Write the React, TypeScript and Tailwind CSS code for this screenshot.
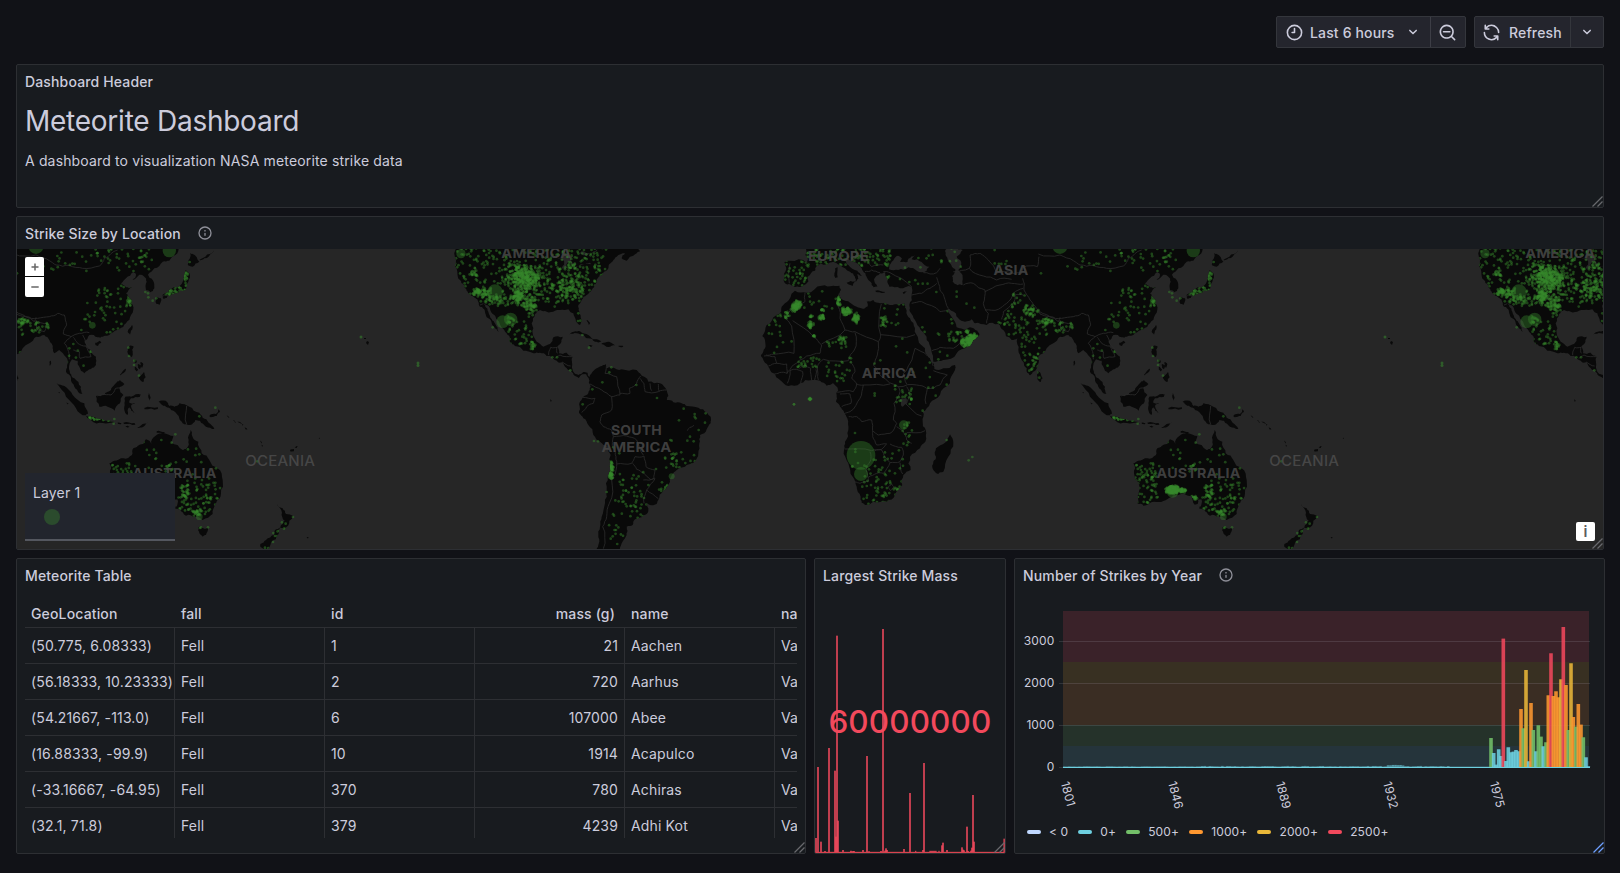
import React from "react";

/* ---------- icons ---------- */
const ICONS = {
  clock: "M12,2A10,10,0,1,0,22,12,10,10,0,0,0,12,2Zm0,18a8,8,0,1,1,8-8A8,8,0,0,1,12,20ZM12,6a1,1,0,0,0-1,1v4H9a1,1,0,0,0,0,2h3a1,1,0,0,0,1-1V7A1,1,0,0,0,12,6Z",
  searchMinus: "M21.71,20.29,18,16.61A9,9,0,1,0,16.61,18l3.68,3.68a1,1,0,0,0,1.42,0A1,1,0,0,0,21.71,20.29ZM11,18a7,7,0,1,1,7-7A7,7,0,0,1,11,18Zm4-8H7a1,1,0,0,0,0,2h8a1,1,0,0,0,0-2Z",
  sync: "M19.91,15.51H15.38a1,1,0,0,0,0,2h2.4A8,8,0,0,1,4,12a1,1,0,1,0-2,0,10,10,0,0,0,16.88,7.23V21a1,1,0,0,0,2,0V16.5A1,1,0,0,0,19.91,15.51ZM12,2A10,10,0,0,0,5.12,4.77V3a1,1,0,0,0-2,0V7.5a1,1,0,0,0,1,1h4.5a1,1,0,0,0,0-2H6.22A8,8,0,0,1,20,12a1,1,0,0,0,2,0A10,10,0,0,0,12,2Z",
  angleDown: "M17,9.17a1,1,0,0,0-1.41,0L12,12.71,8.46,9.17a1,1,0,0,0-1.41,0,1,1,0,0,0,0,1.42l4.24,4.24a1,1,0,0,0,1.42,0L17,10.59A1,1,0,0,0,17,9.17Z",
  info: "M12,2A10,10,0,1,0,22,12,10,10,0,0,0,12,2Zm0,18a8,8,0,1,1,8-8A8,8,0,0,1,12,20Zm0-8.5a1,1,0,0,0-1,1v3a1,1,0,0,0,2,0v-3A1,1,0,0,0,12,11.5Zm0-4a1.25,1.25,0,1,0,1.25,1.25A1.25,1.25,0,0,0,12,7.5Z",
};

function Icon({ name, className }: { name: keyof typeof ICONS; className: string }) {
  return (
    <svg viewBox="0 0 24 24" fill="currentColor" className={className}>
      <path d={ICONS[name]} />
    </svg>
  );
}

function ResizeHandle({ className = "text-[#68696d]" }: { className?: string }) {
  return (
    <svg viewBox="0 0 12 12" className={`absolute right-0 bottom-0 h-3 w-3 ${className}`} stroke="currentColor" strokeWidth="1.3">
      <path d="M1.5 11.5 L11.5 1.5 M6.5 11.5 L11.5 6.5" fill="none" />
    </svg>
  );
}

function Panel({
  title,
  info,
  className,
  handleClass,
  children,
}: {
  title: string;
  info?: boolean;
  className: string;
  handleClass?: string;
  children: React.ReactNode;
}) {
  return (
    <section className={`relative flex flex-col overflow-hidden rounded-xs border border-[#2d2f33] bg-[#181b1f] ${className}`}>
      <header className="flex h-8 shrink-0 items-center px-2 text-sm font-medium">
        <h2 className="mt-0.5">{title}</h2>
        {info && <Icon name="info" className="ml-4 h-4 w-4 text-[#8e8f98]" />}
      </header>
      {children}
      <ResizeHandle className={handleClass} />
    </section>
  );
}

/* ---------- map geometry ---------- */
type Pt = [number, number];

function rng(seed: number) {
  let s = seed;
  return () => {
    s = (s * 1664525 + 1013904223) % 4294967296;
    return s / 4294967296;
  };
}

function parse(s: string): Pt[] {
  return s.trim().split(/\s+/).map((p) => p.split(",").map(Number) as Pt);
}

/* Subdivides each edge with a small sideways shift, for natural coastlines. */
function coast(s: string, closed = true, amount = 0.16) {
  const rand = rng(s.length * 97 + 13);
  let pts = parse(s);
  for (let k = 0; k < 2; k++) {
    const out: Pt[] = [];
    const n = closed ? pts.length : pts.length - 1;
    for (let i = 0; i < n; i++) {
      const a = pts[i];
      const b = pts[(i + 1) % pts.length];
      const dx = b[0] - a[0];
      const dy = b[1] - a[1];
      const straight = (a[1] <= 27 && b[1] <= 27) || Math.hypot(dx, dy) < 4;
      const r = straight ? 0 : (rand() - 0.5) * 2 * amount;
      out.push(a, [(a[0] + b[0]) / 2 - dy * r, (a[1] + b[1]) / 2 + dx * r]);
    }
    if (!closed) out.push(pts[pts.length - 1]);
    pts = out;
  }
  return "M" + pts.map((p) => p[0].toFixed(1) + " " + p[1].toFixed(1)).join("L") + (closed ? "Z" : "");
}

type Region = {
  id: string;
  x: number;
  land: string[];
  water: string[];
  borders: string[];
  clusters: number[][];
  dots: string;
  big: number[][];
};

/* Each region is drawn in third-pixel units from its own left edge. */
const REGIONS: Region[] = [
  {
    id: "americas",
    x: 440,
    land: [
      "50,20 48,60 52,95 60,120 72,135 80,152 92,165 102,172 112,178 120,200 135,215 140,232 155,248 163,262 176,275 166,252 155,237 145,215 136,200 131,190 146,198 158,222 172,240 185,262 200,280 210,295 208,303 225,318 250,332 280,340 300,338 320,348 345,360 365,367 375,380 395,395 402,406 415,414 427,403 438,402 446,415 452,440 445,460 430,470 418,490 420,508 418,520 430,535 445,555 460,585 480,605 505,620 512,645 510,670 503,710 500,750 495,790 485,830 480,860 475,890 478,905 468,935 536,935 545,910 555,895 562,875 560,860 578,855 585,838 605,832 622,820 625,805 612,788 630,795 648,793 655,780 670,752 690,725 695,705 710,690 735,680 760,668 775,640 778,610 780,585 800,568 812,550 812,530 800,518 775,503 740,498 725,490 700,487 680,480 685,468 680,450 660,430 625,425 600,400 590,390 545,388 515,382 500,385 500,372 490,375 470,385 455,400 448,412 442,398 430,396 415,405 400,395 396,380 398,350 380,338 357,340 352,320 362,310 368,290 340,292 330,312 310,320 290,305 278,280 275,250 285,222 300,210 320,215 345,212 360,210 385,208 400,220 408,245 420,255 425,240 418,215 415,195 425,180 440,165 455,150 468,130 470,118 480,108 492,95 505,85 508,72 520,60 530,50 555,40 545,55 560,62 570,50 590,40 600,33 590,20",
      "388,283 402,275 420,274 445,285 465,298 484,304 465,305 445,295 430,284 410,280",
      "484,312 500,306 525,316 505,321",
      "536,317 550,318 548,321 536,320",
      "446,316 458,317 454,321",
      "440,240 443,241 450,250 446,254",
      "330,478 335,482 333,487",
    ],
    water: ["350,58 378,45 400,48 392,56 404,74 396,80 388,64 376,88 366,84 372,62", "400,84 450,68 452,73 405,88", "420,40 440,48 470,34 472,28 445,40 425,34"],
    borders: [
      "500,372 495,400 530,410 540,465 515,470 485,450 450,432",
      "540,460 570,460 568,445 590,430 602,408",
      "600,415 612,430 615,455 655,455 680,450",
      "630,430 635,452",
      "655,432 658,454",
      "515,470 515,510 485,525 480,545 490,560 515,570 520,590",
      "428,472 465,475 460,490 440,500 425,517",
      "520,590 520,625 528,650 530,680 515,720 508,790 500,830 488,860 490,926",
      "520,590 560,588 590,600 610,645",
      "530,672 575,670 585,650 612,648 618,680 645,690 642,715 610,720",
      "578,670 590,688 612,700 630,718 645,716 620,750 655,776",
      "620,750 612,790",
      "326,345 332,322 352,322",
      "345,356 360,345 398,350",
      "366,366 392,378",
      "350,322 352,340",
      "120,195 130,190",
      "742,572 750,562 762,556",
    ],
    clusters: [
      [270, 110, 230, 90, 380, 0],
      [255, 112, 62, 50, 190, 1],
      [262, 112, 34, 26, 90, 1],
      [235, 168, 19, 20, 85, 1],
      [232, 98, 14, 20, 40, 1],
      [270, 195, 24, 32, 70, 1],
      [245, 150, 60, 40, 60, 0],
      [125, 157, 26, 15, 60, 1],
      [104, 158, 6, 5, 8, 1],
      [165, 180, 36, 14, 30, 1],
      [390, 145, 56, 46, 95, 1],
      [400, 100, 80, 60, 90, 0],
      [240, 278, 36, 36, 34, 0],
      [278, 318, 8, 14, 16, 1],
      [210, 240, 16, 16, 14, 1],
      [97, 98, 8, 7, 10, 1],
      [107, 106, 4, 4, 4, 1],
      [512, 692, 9, 28, 85, 1],
      [575, 750, 50, 55, 30, 0],
      [595, 800, 28, 40, 20, 0],
      [730, 655, 38, 30, 22, 0],
      [525, 870, 26, 50, 14, 0],
      [690, 665, 20, 25, 8, 0],
      [668, 742, 16, 16, 10, 0],
    ],
    dots: "447,323 427,285 514,382 508,397 487,427 457,448 428,493 462,603 474,604 651,474 731,506 717,541 764,522 767,535 764,530 797,520 795,548 776,570 750,590 742,602 761,604 589,435 391,391 337,352 351,352 415,220 414,243 421,242 158,262 1110,477 1110,477 1110,477 1110,474 1110,480 1107,477 1113,477 1062,493 691,600 695,602 648,687 538,640 520,622 500,756 558,752 558,752",
    big: [[63, 41, 14], [165, 157, 24], [188, 245, 19], [212, 238, 20], [695, 709, 9]],
  },
  {
    id: "africa-asia",
    x: 740,
    land: [
      "165,152 200,158 245,137 280,137 298,137 303,150 298,165 305,178 330,188 350,200 368,206 382,200 380,185 400,180 420,190 450,195 480,192 493,190 500,212 510,235 525,265 535,300 555,325 565,350 580,370 583,387 610,385 645,375 645,390 630,430 600,465 570,490 548,515 548,545 557,570 556,605 540,625 510,650 512,690 490,705 487,735 465,765 440,785 400,785 375,795 365,788 362,770 350,740 338,710 325,670 312,630 315,605 325,570 322,535 312,515 300,500 288,485 290,465 295,450 290,440 278,430 260,437 240,422 215,420 180,430 145,438 120,420 100,400 85,380 68,355 63,345 75,325 75,300 67,288 80,255 100,232 120,220 130,195 150,175",
      "200,20 196,45 203,55 200,68 150,62 133,66 138,90 132,112 135,130 150,133 165,141 190,137 205,125 205,110 225,92 228,80 240,72 262,74 280,65 300,75 330,95 345,110 346,125 355,116 352,102 366,108 352,92 325,75 315,60 325,55 340,65 365,85 376,100 385,120 395,135 400,142 412,140 402,118 420,100 436,97 436,107 442,125 448,140 480,145 515,140 515,165 508,195 510,215 525,240 542,270 560,300 574,330 580,365 610,360 650,340 665,328 695,310 718,285 712,272 690,262 668,267 650,262 645,245 625,215 622,205 634,212 655,235 675,245 695,238 705,250 740,255 775,252 790,270 815,300 832,295 835,330 845,360 860,395 870,406 880,395 893,375 895,350 920,325 940,310 960,290 985,285 1000,300 1010,325 1015,340 1030,330 1044,345 1055,370 1050,395 1065,415 1075,440 1090,460 1099,462 1095,440 1075,415 1062,400 1060,375 1068,358 1085,362 1090,380 1105,400 1125,387 1140,375 1140,350 1125,330 1105,305 1120,285 1145,292 1160,290 1185,280 1210,268 1230,250 1245,225 1250,195 1240,175 1230,160 1248,142 1230,142 1215,130 1230,115 1252,96 1260,105 1250,120 1270,104 1285,110 1292,125 1290,150 1303,157 1315,145 1310,120 1296,104 1315,85 1340,65 1360,62 1378,45 1392,20",
      "630,583 640,608 625,650 610,695 595,702 580,690 580,665 588,650 588,625 615,608",
      "893,393 900,397 908,415 902,426 892,418",
      "285,85 293,82 293,112 286,114",
      "320,128 345,124 338,138",
      "406,152 436,156 430,159 408,156",
      "488,157 502,154 492,163",
    ],
    water: [
      "447,88 455,65 470,48 486,56 480,66 502,66 505,56 525,46 515,58 545,66 568,80 560,92 530,92 505,82 475,90",
      "616,30 645,22 668,30 650,50 664,68 655,90 668,112 668,135 652,136 638,126 636,108 646,88 630,70 618,48",
      "480,478 498,474 500,492 486,500",
    ],
    borders: [
      "195,158 195,185 165,200 140,225 138,235 155,258 162,340 100,343 78,345",
      "158,242 220,290 245,315 240,340 200,348 160,375 140,400",
      "245,312 315,270 300,235 295,200 298,160",
      "315,270 345,275 415,305 422,285 424,192",
      "422,284 525,284",
      "345,278 343,330 325,362 250,358 232,380 235,420",
      "415,305 412,345 400,375 425,410 475,440 530,435 560,445 600,435 622,405 580,392",
      "330,365 345,395 335,415 350,432 370,435 450,432",
      "350,432 340,455 292,457",
      "300,462 330,462 333,490 305,500",
      "370,435 360,475 330,515 312,522",
      "326,530 350,530 365,545 395,540 398,572 415,585 450,580 470,550 460,540 462,490 480,455 475,440",
      "314,627 395,632 425,628 440,612 410,615 398,590 398,572",
      "390,635 390,665 378,690 385,725 360,730 345,726",
      "405,632 425,630 450,668 430,700 410,700 385,712",
      "450,668 480,665 490,645 485,622 450,612",
      "480,668 488,702",
      "445,740 455,732 462,742 452,752 445,740",
      "500,578 555,572",
      "498,492 545,528",
      "562,445 558,492",
      "470,560 490,575 500,600 515,610",
      "500,440 510,470 500,490",
      "525,325 510,370 490,400 500,432",
      "525,325 560,345 575,362 580,378",
      "182,430 188,395 170,388 150,392 142,430",
      "215,420 212,385 195,375 178,385",
      "224,420 228,388",
      "72,348 105,350 110,370 85,378",
      "110,370 140,372 142,400 118,398 100,402",
      "515,165 545,160 570,145 590,130",
      "515,190 545,185 600,215 622,210",
      "590,112 600,150 612,170 625,205",
      "576,332 600,322 640,325 665,300 690,285",
      "670,135 700,130 735,150 730,190 745,220 740,250",
      "735,155 780,135 815,130 850,132",
      "735,210 775,208 800,190 820,160 850,145",
      "785,238 790,215 820,190 825,165 850,165",
      "848,115 852,150 870,180 890,205 930,230 965,235 1000,230 1025,220 1045,225",
      "895,210 900,222 955,245 960,232",
      "960,240 965,270 985,275 992,250 965,245",
      "688,85 690,45 720,40 745,60 770,100 800,95 845,100 850,82 892,80 897,50",
      "640,95 688,85 730,108 770,120 815,118",
      "895,42 960,45 1000,62 1020,75 1060,76 1100,85 1150,78 1165,55 1205,30",
      "1045,225 1052,255 1042,282 1065,290 1045,310 1058,335 1060,358",
      "1065,290 1090,280 1120,278",
      "1072,292 1085,310 1110,318 1125,350 1092,355 1090,335 1072,330",
      "1100,285 1110,310 1130,340",
      "430,95 450,98 515,140",
      "150,70 148,130",
      "550,98 590,98 600,85",
      "340,60 352,45 380,50 395,80 430,75",
      "375,95 395,90 420,98",
    ],
    clusters: [
      [172, 194, 13, 13, 55, 1],
      [162, 204, 14, 12, 35, 1],
      [142, 226, 13, 12, 14, 1],
      [104, 242, 20, 20, 8, 0],
      [212, 254, 9, 11, 28, 1],
      [245, 232, 9, 9, 28, 1],
      [247, 212, 6, 6, 8, 1],
      [222, 288, 5, 5, 8, 1],
      [212, 228, 9, 5, 8, 1],
      [296, 185, 7, 18, 26, 1],
      [318, 214, 16, 12, 70, 1],
      [348, 235, 9, 15, 50, 1],
      [307, 298, 14, 12, 16, 1],
      [290, 312, 30, 14, 12, 0],
      [432, 243, 12, 16, 16, 1],
      [460, 225, 40, 35, 14, 0],
      [300, 390, 40, 38, 24, 0],
      [205, 367, 34, 16, 22, 0],
      [230, 175, 65, 38, 14, 0],
      [110, 310, 50, 35, 10, 0],
      [170, 100, 38, 38, 38, 0],
      [325, 48, 130, 30, 130, 0],
      [590, 45, 60, 22, 12, 0],
      [510, 108, 75, 30, 12, 0],
      [490, 465, 26, 28, 20, 0],
      [502, 580, 14, 36, 14, 0],
      [430, 735, 65, 58, 80, 0],
      [450, 640, 50, 30, 8, 0],
      [695, 295, 17, 14, 110, 1],
      [680, 308, 18, 14, 90, 1],
      [681, 276, 6, 6, 10, 1],
      [645, 290, 22, 16, 22, 0],
      [870, 215, 26, 25, 42, 1],
      [920, 243, 24, 11, 32, 1],
      [862, 290, 62, 60, 54, 0],
      [875, 370, 25, 30, 28, 0],
      [970, 262, 28, 16, 22, 0],
      [830, 190, 28, 30, 14, 0],
      [800, 240, 24, 18, 12, 0],
      [1195, 175, 60, 45, 34, 0],
      [1240, 180, 12, 18, 20, 1],
      [1160, 250, 60, 30, 16, 0],
      [1150, 60, 170, 34, 46, 0],
      [1285, 50, 18, 26, 14, 1],
      [1080, 350, 50, 50, 8, 0],
      [500, 370, 100, 60, 12, 0],
      [600, 250, 100, 60, 7, 0],
      [730, 60, 70, 35, 8, 0],
    ],
    dots: "210,477 210,477 210,477 210,474 210,480 207,477 213,477 162,493 514,477 514,475 514,479 514,477 548,512 587,467 620,434 565,443 579,443 345,579 404,460 404,467 346,628 346,636 337,679 337,680 354,669 407,660 435,661 686,661 697,651 620,600 903,100 1006,86 1024,48 1114,189 1060,325 1072,312 1096,270 703,203 650,155 650,170 547,262 487,296 595,358 622,347 589,156 898,413",
    big: [[363, 646, 43], [363, 702, 21], [491, 555, 14], [960, 20, 22], [1129, 256, 10], [1360, 32, 20]],
  },
  {
    id: "oceania",
    x: 1060,
    land: [
      "62,430 85,438 110,465 145,490 156,520 150,526 120,505 90,470",
      "150,527 170,530 200,538 212,542 232,545 240,551 200,549 165,541",
      "245,548 256,549 254,553 246,552",
      "262,548 295,549 298,554 264,552",
      "304,562 320,552 336,548 326,557 308,564",
      "268,558 282,560 276,563",
      "180,468 205,465 225,450 237,432 252,420 265,432 250,445 262,465 252,490 236,512 215,500 190,500",
      "268,470 285,470 315,464 312,470 285,475 280,488 298,490 285,498 300,522 286,512 280,502 276,524 268,520 266,495",
      "280,318 293,320 290,340 288,352 278,348 274,335",
      "295,358 302,362 300,370 294,366",
      "306,372 314,376 312,388 306,384",
      "314,366 321,370 318,384 314,378",
      "297,380 306,388 302,394 296,388",
      "308,410 324,396 329,412 322,426 312,420",
      "252,404 268,386 270,388 254,406",
      "338,460 343,470 340,482 337,470",
      "325,504 366,502 365,507 326,508",
      "368,485 388,482 396,490 400,498 415,500 430,490 460,500 490,518 500,533 518,548 535,567 510,560 492,542 478,540 462,555 440,550 428,528 405,510 390,500 374,492",
      "520,528 540,522 548,508 552,516 542,528 524,532",
      "572,527 580,532 578,534",
      "590,540 600,547 597,548",
      "604,545 622,554 620,557",
      "626,562 635,568 630,569",
      "672,602 678,608 675,610",
      "676,614 681,618 678,620",
      "762,630 774,627 773,634 764,635",
      "776,622 786,618 782,624",
      "848,594 852,594 851,597",
      "362,574 386,576 384,580 362,578",
      "220,670 235,662 262,655 288,645 292,625 305,618 330,598 346,612 358,588 385,580 412,588 405,607 440,630 452,625 458,600 464,570 473,598 487,605 497,640 520,660 545,685 560,720 555,760 540,790 530,822 500,840 478,830 450,827 432,808 418,806 424,785 404,794 395,768 370,760 335,770 310,783 282,785 250,797 232,790 236,760 222,700",
      "487,862 504,866 516,863 510,885 500,890 490,880",
      "723,792 740,805 750,822 772,828 760,842 744,868 733,862 746,842 738,818",
      "735,862 728,882 705,908 696,928 675,922 673,912 690,900 715,885 720,868",
      "462,40 470,42 490,65 470,80 456,76 458,60",
      "448,90 460,100 457,125 448,150 420,160 400,168 378,166 400,150 425,142 440,125 445,105",
      "360,172 375,175 370,195 360,190",
      "380,170 394,166 392,174 382,176",
      "275,275 288,255 290,262 282,284",
      "178,308 192,302 196,308 186,318 178,314",
      "40,375 43,362 45,364 42,377",
      "490,60 508,50 534,32 530,38 505,55",
      "812,892 818,892 816,896",
      "66,455 72,457 70,460",
      "92,487 98,490 95,493",
    ],
    water: ["414,780 424,778 422,800 414,798"],
    borders: ["184,468 198,462 225,465 238,446 256,444", "452,498 452,553"],
    clusters: [
      [338, 749, 22, 13, 220, 1],
      [366, 751, 12, 7, 40, 1],
      [262, 722, 36, 68, 74, 0],
      [505, 765, 54, 50, 46, 0],
      [447, 755, 18, 24, 34, 1],
      [475, 795, 48, 24, 34, 0],
      [485, 818, 22, 14, 20, 1],
      [405, 772, 12, 10, 14, 1],
      [400, 684, 22, 14, 12, 1],
      [410, 655, 90, 50, 12, 0],
      [415, 155, 42, 14, 45, 1],
      [450, 115, 10, 26, 18, 1],
      [200, 539, 30, 5, 14, 1],
      [163, 534, 12, 5, 8, 1],
      [725, 880, 35, 45, 10, 0],
    ],
    dots: "538,503 490,529 418,583 376,600 340,645 360,655 407,608 490,643 495,862 492,864 516,862 771,831 738,847 744,866 749,851 712,879 717,888 711,906 687,923 235,537 233,551 277,323 279,348 295,362 294,375 309,407 664,664 461,66 443,658 452,665 350,182 361,175 336,160 337,172 328,156 470,703 275,711 277,712 540,685 515,735",
    big: [[338, 755, 18], [490, 830, 10]],
  },
];

const PACIFIC_DOTS: Pt[] = [[1385, 337], [1442, 363], [1442, 365.5]];

function scatter(region: Region) {
  const rand = rng(region.x * 31 + 7);
  const out: Pt[] = [];
  for (const [cx, cy, rx, ry, n, dense] of region.clusters) {
    for (let i = 0; i < n; i++) {
      const a = rand() * Math.PI * 2;
      if (dense) {
        const r = (rand() + rand()) / 1.7;
        out.push([cx + Math.cos(a) * r * rx, cy + Math.sin(a) * r * ry]);
      } else {
        out.push([cx + (rand() * 2 - 1) * rx, cy + (rand() * 2 - 1) * ry]);
      }
    }
  }
  return out;
}

function RegionLayer({ region }: { region: Region }) {
  const land = region.land.map((s) => coast(s)).join("");
  const clip = `land-${region.id}`;
  return (
    <g transform={`translate(${region.x} 240) scale(0.33333)`}>
      <clipPath id={clip}>
        <path d={land} />
      </clipPath>
      <path d={land} fill="#090909" />
      <path d={region.water.map((s) => coast(s)).join("")} fill="#262626" />
      <path d={region.borders.map((s) => coast(s, false, 0.1)).join("")} fill="none" stroke="#2a2a2a" strokeWidth="2.6" />
      <g fill="#37872d" fillOpacity="0.47" clipPath={`url(#${clip})`}>
        {scatter(region).map((p, i) => (
          <circle key={i} cx={p[0].toFixed(1)} cy={p[1].toFixed(1)} r="4.1" />
        ))}
      </g>
      <g fill="#37872d" fillOpacity="0.47">
        {parse(region.dots).map((p, i) => (
          <circle key={i} cx={p[0]} cy={p[1]} r="4.1" />
        ))}
      </g>
      <g fill="#37872d" fillOpacity="0.4">
        {region.big.map((b, i) => (
          <circle key={i} cx={b[0]} cy={b[1]} r={b[2]} />
        ))}
      </g>
    </g>
  );
}

/* text, centre x, baseline, width */
const LABELS: [string, number, number, number][] = [
  ["AMERICA", 536.3, 258.2, 70],
  ["SOUTH", 636.4, 435, 51],
  ["AMERICA", 636.4, 452, 70],
  ["EUROPE", 838.4, 260.5, 61],
  ["ASIA", 1011, 274.5, 35],
  ["AFRICA", 889.2, 377.8, 55],
  ["AUSTRALIA", 1198.6, 478.3, 84],
  ["OCEANIA", 1304.2, 466.4, 70],
  ["AUSTRALIA", 174.6, 478.3, 84],
  ["OCEANIA", 280.2, 466.4, 70],
  ["AMERICA", 1560.3, 258.2, 70],
];

function WorldMap() {
  return (
    <svg viewBox="17 249 1586 300" className="block h-[300px] w-[1586px] bg-[#262626]">
      <defs>
        <g id="world">
          {REGIONS.map((r) => (
            <RegionLayer key={r.id} region={r} />
          ))}
          <path d="M1391 341 l2 1 l-1 3 l-2 -2Z M1388 338 l2 0 l0 1 l-2 0Z" fill="#090909" />
          {PACIFIC_DOTS.map((p, i) => (
            <circle key={i} cx={p[0]} cy={p[1]} r="1.5" fill="#37872d" fillOpacity="0.55" />
          ))}
        </g>
      </defs>
      <use href="#world" x="-1024" />
      <use href="#world" />
      <use href="#world" x="1024" />
      {LABELS.map(([t, x, y, w], i) => (
        <text
          key={i}
          x={x - w / 2}
          y={y}
          textLength={w}
          lengthAdjust="spacingAndGlyphs"
          fontSize="13.8"
          letterSpacing="0.2"
          fontFamily="Inter, sans-serif"
          fontWeight={t === "OCEANIA" ? 500 : 700}
          fill={t === "OCEANIA" ? "#4a4a4a" : "#444444"}
          fillOpacity="0.92"
        >
          {t}
        </text>
      ))}
    </svg>
  );
}

/* ---------- table ---------- */
const ROWS = [
  ["(50.775, 6.08333)", "Fell", "1", "21", "Aachen", "Valid"],
  ["(56.18333, 10.23333)", "Fell", "2", "720", "Aarhus", "Valid"],
  ["(54.21667, -113.0)", "Fell", "6", "107000", "Abee", "Valid"],
  ["(16.88333, -99.9)", "Fell", "10", "1914", "Acapulco", "Valid"],
  ["(-33.16667, -64.95)", "Fell", "370", "780", "Achiras", "Valid"],
  ["(32.1, 71.8)", "Fell", "379", "4239", "Adhi Kot", "Valid"],
];
const HEAD = ["GeoLocation", "fall", "id", "mass (g)", "name", "nametype"];

function MeteoriteTable() {
  return (
    <div className="mx-2 mt-[5px] h-[242px] w-[772px] overflow-hidden text-sm">
      <div className="flex h-8 w-[900px] items-center border-b border-[#2d2f33] pt-1 font-medium">
        {HEAD.map((h, i) => (
          <div key={h} className={`w-[150px] px-1.5 ${i === 3 ? "pr-[10px] text-right" : ""}`}>
            {h}
          </div>
        ))}
      </div>
      {ROWS.map((row) => (
        <div key={row[4]} className="flex h-9 w-[900px] border-b border-[#2d2f33]">
          {row.map((c, i) => (
            <div
              key={i}
              className={`flex w-[150px] items-center border-r border-[#2d2f33] pl-1.5 whitespace-nowrap ${i === 3 ? "justify-end pr-1.5" : ""}`}
            >
              {c}
            </div>
          ))}
        </div>
      ))}
    </div>
  );
}

/* ---------- stat sparkline: x and top, in third-pixels ---------- */
const SPARK: Pt[] = [
  [48, 864], [54, 651], [63, 875], [75, 903], [87, 594], [105, 662], [108, 860], [111, 257], [114, 812],
  [129, 900], [159, 903], [162, 903], [189, 900], [201, 618], [243, 903], [249, 237], [255, 902], [258, 895],
  [261, 900], [312, 897], [330, 729], [369, 900], [372, 639], [426, 886], [429, 878], [441, 900],
  [486, 892], [489, 899], [492, 901], [501, 830], [504, 903], [513, 902], [516, 893], [519, 735], [522, 875], [613, 866],
];

function StatGraph() {
  return (
    <svg viewBox="815 591 190 262" className="block h-[262px] w-[190px]">
      <g transform="translate(800 550) scale(0.33333)">
        {SPARK.map(([x, y], i) => (
          <rect key={i} x={x - 3} y={y} width="6" height={908 - y} fill="#f2495c" fillOpacity="0.77" />
        ))}
        <rect x="46" y="905.5" width="568" height="3.5" fill="#d9434f" />
        <path d="M345 904h4M388 904h22M415 904h4M150 904h6M205 905h4" stroke="#f2495c" strokeWidth="3" />
      </g>
      <text
        x="828.4"
        y="732.6"
        textLength="163"
        lengthAdjust="spacingAndGlyphs"
        fontSize="30.6"
        fontWeight="500"
        fontFamily="Inter, sans-serif"
        fill="#f2495c"
      >
        60000000
      </text>
    </svg>
  );
}

/* ---------- strikes by year ---------- */
const TONE: Record<string, string> = { c: "#6ed0e0", g: "#73bf69", o: "#ff9830", y: "#eab839", r: "#f2495c" };
const BARS =
  "153,444,g 161,489,c 168,524,c 176,478,c 183,498,c 190,146,r 198,513,c 205,472,c 213,487,c 220,485,c 228,480,c 236,484,c 243,357,o 250,415,g 258,240,y 266,514,c 273,339,o 280,420,g 288,484,c 295,406,g 303,440,g 310,469,c 318,457,g 325,316,o 333,190,r 340,318,o 348,304,o 355,322,o 363,268,y 370,111,r 378,285,o 385,420,g 393,220,y 400,381,o 408,410,g 415,342,o 423,404,o 430,442,g 438,502,c 445,529,c"
    .split(" ")
    .map((s) => s.split(","));
const BANDS: [number, number, string][] = [
  [611, 51, "#3a2229"],
  [662, 21, "#383022"],
  [683, 42, "#3a2d23"],
  [725, 21, "#25322a"],
  [746, 21.5, "#25343b"],
];
const YEARS: [string, number, number][] = [
  ["1801", 1068.3, 793.8],
  ["1846", 1176, 795],
  ["1889", 1283.6, 795],
  ["1932", 1391, 795],
  ["1975", 1497.6, 794.5],
];

function StrikesChart() {
  const rand = rng(42);
  const low = Array.from({ length: 154 }, (_, i) => {
    const peak = i > 128 && i < 136 ? 1 : 0;
    return 0.1 + rand() * (i < 50 ? 0.4 : 0.8) + peak;
  });
  return (
    <svg viewBox="1015 591 589 225" className="block h-[225px] w-[589px]">
      {BANDS.map(([y, h, c]) => (
        <rect key={y} x="1063" y={y} width="526" height={h} fill={c} />
      ))}
      {[3000, 2000, 1000, 0].map((v) => {
        const y = 767.5 - (v / 1000) * 42;
        return (
          <g key={v}>
            <rect x="1059" y={y - 0.5} width="531" height="1" fill="#ccccdc" fillOpacity="0.14" />
            <text x="1054.4" y={y + 3.6} textAnchor="end" fontSize="12" letterSpacing="0.1" fontFamily="Inter, sans-serif" fill="#ccccdc">
              {v}
            </text>
          </g>
        );
      })}
      {low.map((v, i) => (
        <rect key={i} x={1063 + i * 2.51} y={766.8 - v} width="2.5" height={v} fill="#6ed0e0" fillOpacity="0.65" />
      ))}
      <rect x="1063" y="766.8" width="527" height="1.2" fill="#6ed0e0" />
      <g transform="translate(1440 590) scale(0.33333)">
        {BARS.map(([x, y, c]) => (
          <g key={x}>
            <rect x={Number(x) - 5} y={y} width="10" height={531 - Number(y)} fill={TONE[c]} fillOpacity="0.8" />
            <rect x={Number(x) - 6} y={y} width="12" height={531 - Number(y)} fill={TONE[c]} fillOpacity="0.35" />
          </g>
        ))}
      </g>
      {YEARS.map(([t, x, y]) => (
        <text
          key={t}
          transform={`translate(${x} ${y}) rotate(75)`}
          textAnchor="middle"
          dominantBaseline="central"
          fontSize="12"
          fontFamily="Inter, sans-serif"
          fill="#ccccdc"
        >
          {t}
        </text>
      ))}
    </svg>
  );
}

const LEGEND: [string, string][] = [
  ["< 0", "bg-[#c0d8ff]"],
  ["0+", "bg-[#6ed0e0]"],
  ["500+", "bg-[#73bf69]"],
  ["1000+", "bg-[#ff9830]"],
  ["2000+", "bg-[#eab839]"],
  ["2500+", "bg-[#f2495c]"],
];

export default function App() {
  return (
    <div className="flex h-[873px] w-[1620px] flex-col overflow-hidden bg-[#111217] pt-4 pl-4 font-['Inter',sans-serif] text-sm tracking-[0.01071em] text-[#ccccdc]">
      <div className="mr-4 flex h-8 justify-end gap-2 font-medium">
        <div className="flex rounded-xs border border-[#34363c] bg-[#24252d]">
          <button className="flex w-[154px] items-center border-r border-[#3d3e46] pl-2">
            <Icon name="clock" className="h-[19px] w-[19px]" />
            <span className="mt-0.5 ml-1.5">Last 6 hours</span>
            <Icon name="angleDown" className="ml-[9px] h-[18px] w-[18px]" />
          </button>
          <button className="flex w-[34px] items-center justify-center pr-px">
            <Icon name="searchMinus" className="h-[19px] w-[19px]" />
          </button>
        </div>
        <div className="flex rounded-xs border border-[#34363c] bg-[#24252d]">
          <button className="flex w-24 items-center border-r border-[#34363c] pl-[7px]">
            <Icon name="sync" className="h-[19px] w-[19px]" />
            <span className="mt-0.5 ml-2">Refresh</span>
          </button>
          <button className="flex w-8 items-center justify-center">
            <Icon name="angleDown" className="h-[18px] w-[18px]" />
          </button>
        </div>
      </div>

      <Panel title="Dashboard Header" className="mt-4 h-36 w-[1588px] shrink-0">
        <div className="px-2">
          <h1 className="mt-2 text-[28px] leading-8 tracking-[-0.00893em]">Meteorite Dashboard</h1>
          <p className="mt-[13px] leading-[22px]">A dashboard to visualization NASA meteorite strike data</p>
        </div>
      </Panel>

      <Panel title="Strike Size by Location" info className="mt-2 h-[334px] w-[1588px] shrink-0">
        <div className="relative">
          <WorldMap />
          <div className="absolute top-2 left-2 flex w-[19px] flex-col gap-px font-bold text-[#666666]">
            <button className="flex h-[19px] items-center justify-center rounded-t-xs bg-white">
              <svg viewBox="0 0 8 8" className="h-2 w-2" stroke="currentColor" strokeWidth="1.5">
                <path d="M0.5 4H7.5M4 0.5V7.5" />
              </svg>
            </button>
            <button className="flex h-5 items-center justify-center rounded-b-xs bg-white">
              <svg viewBox="0 0 8 8" className="h-2 w-2" stroke="currentColor" strokeWidth="1.5">
                <path d="M0.3 4H7.7" />
              </svg>
            </button>
          </div>
          <div className="absolute bottom-2 left-2 h-[68px] w-[150px] border-b-2 border-[#54575f] bg-[#22252d] px-2 pt-[9px]">
            <div className="leading-[22px]">Layer 1</div>
            <div className="mt-[5px] ml-[11px] h-4 w-4 rounded-full bg-[#2b4b2d]" />
          </div>
          <button className="absolute right-2 bottom-2 flex h-[19px] w-[19px] items-center justify-center rounded-xs bg-white text-[15px] font-semibold text-[#5c5c5c]">
            i
          </button>
        </div>
      </Panel>

      <div className="mt-2 flex h-[296px] gap-2">
        <Panel title="Meteorite Table" className="w-[790px] shrink-0">
          <MeteoriteTable />
        </Panel>
        <Panel title="Largest Strike Mass" className="w-48 shrink-0">
          <StatGraph />
        </Panel>
        <Panel title="Number of Strikes by Year" info className="w-[591px] shrink-0" handleClass="text-[#6e9fff]">
          <StrikesChart />
          <div className="ml-3 flex h-8 items-center text-xs">
            {LEGEND.map(([t, c]) => (
              <div key={t} className="flex items-center pr-[10px]">
                <span className={`mr-2 h-1 w-[14px] rounded-full ${c}`} />
                {t}
              </div>
            ))}
          </div>
        </Panel>
      </div>
    </div>
  );
}
